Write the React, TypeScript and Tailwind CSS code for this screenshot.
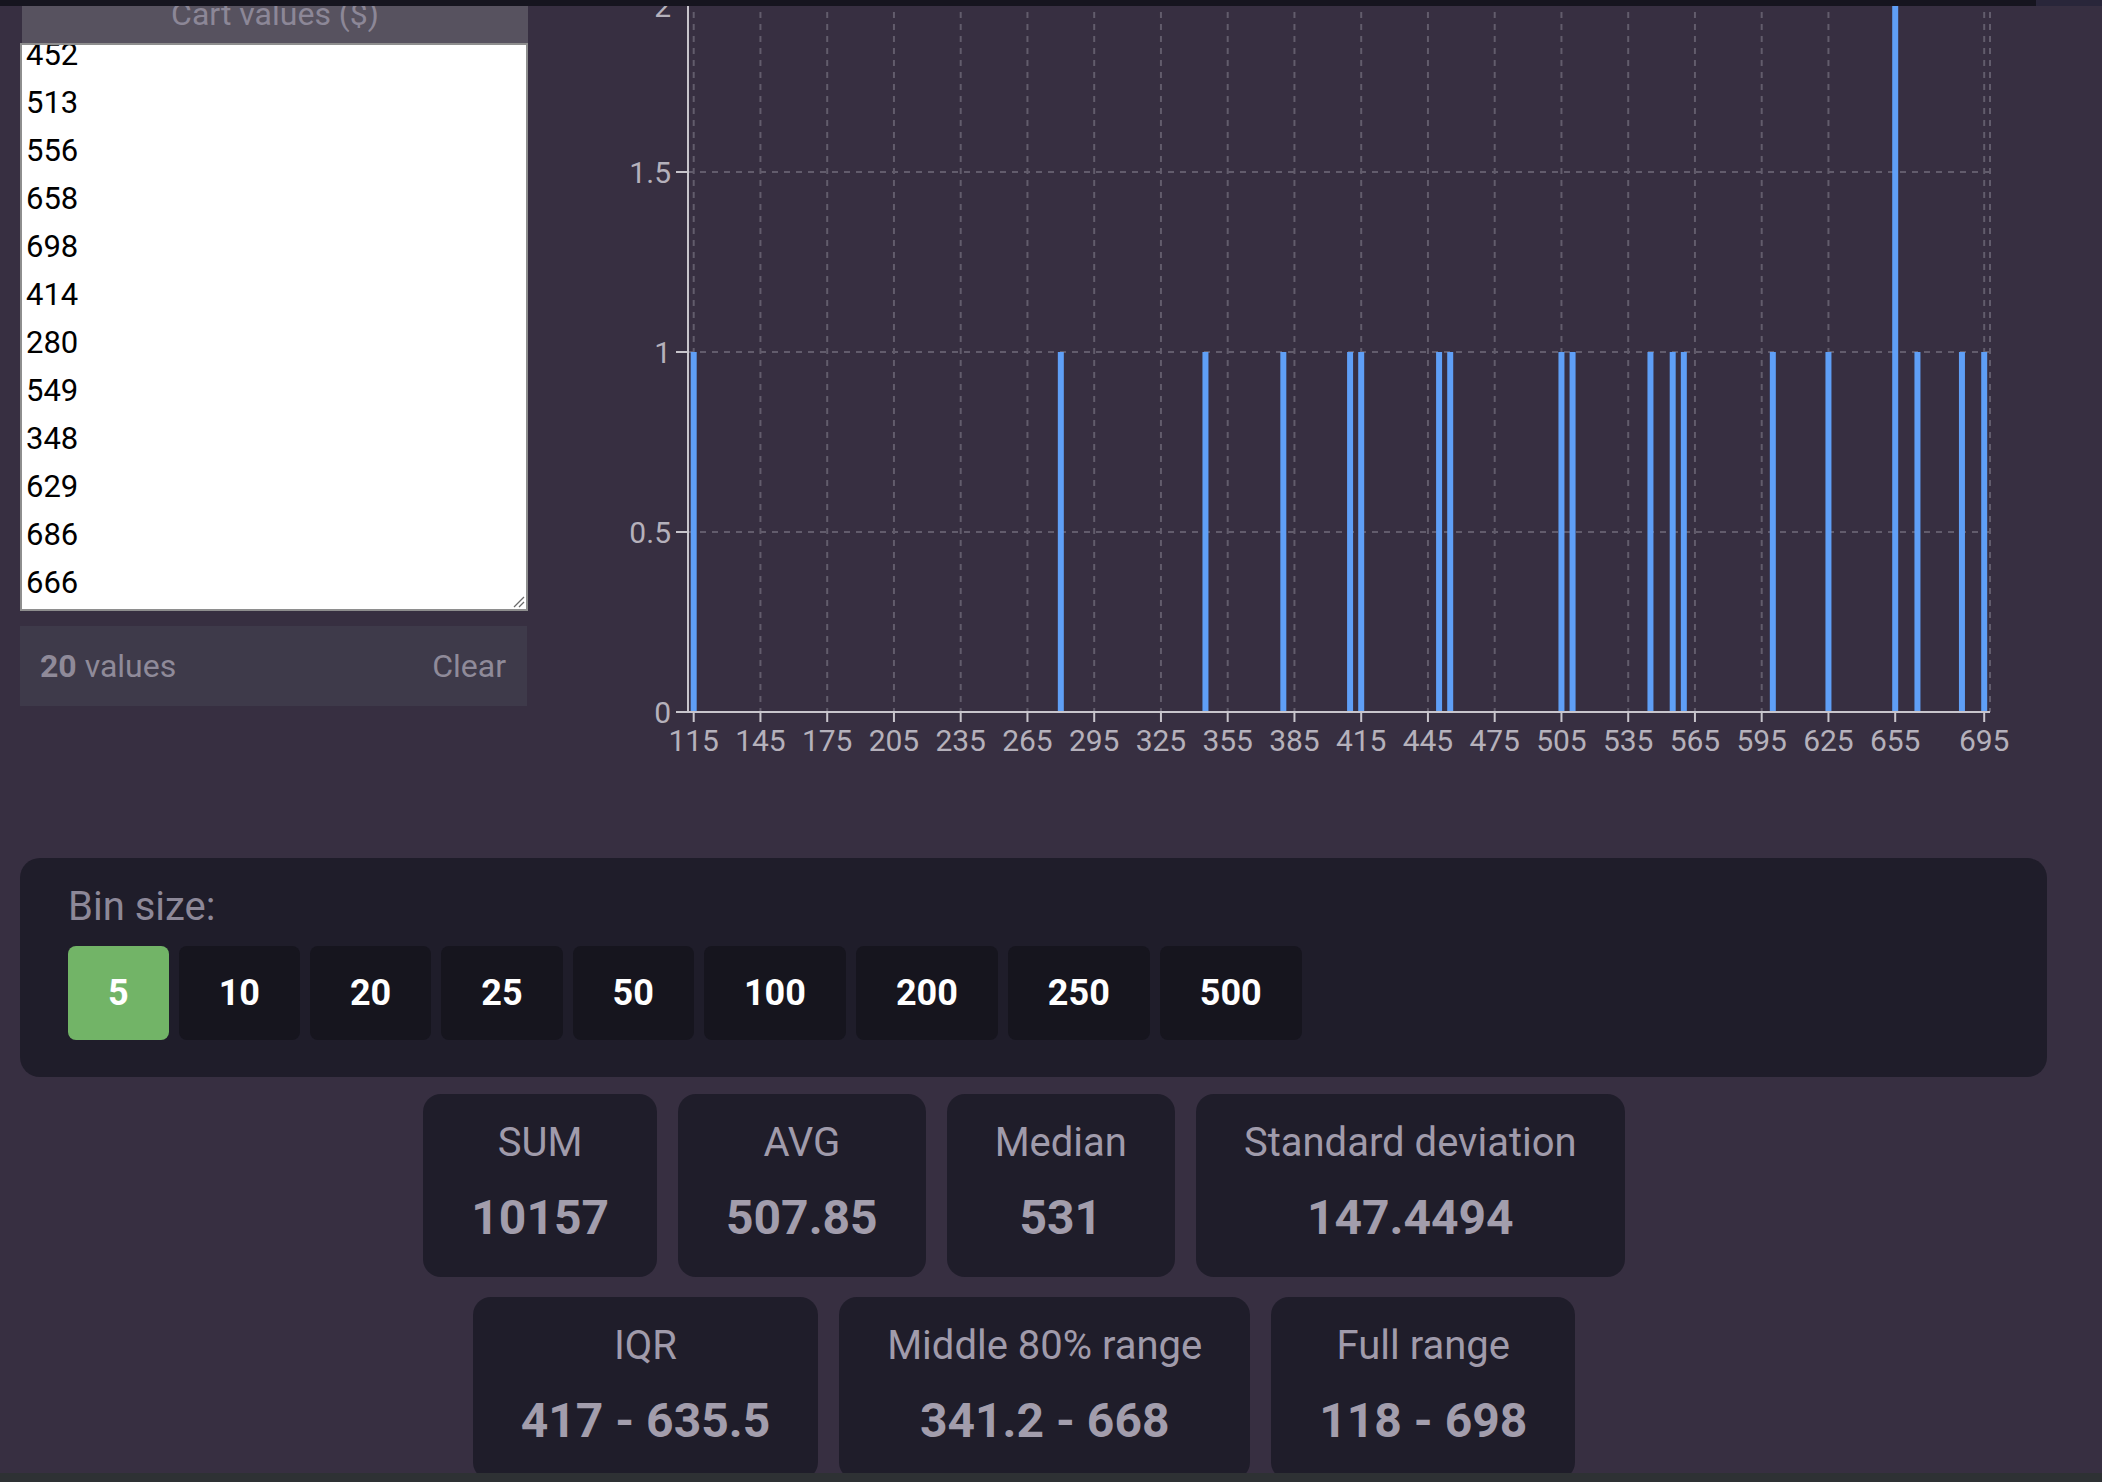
import React from "react";

const VALUES = ["452", "513", "556", "658", "698", "414", "280", "549", "348", "629", "686", "666"];

// bin start -> count, bin size 5
const BINS: [number, number][] = [
  [115, 1], [280, 1], [345, 1], [380, 1], [410, 1], [415, 1], [450, 1], [455, 1],
  [505, 1], [510, 1], [545, 1], [555, 1], [560, 1], [600, 1], [625, 1], [655, 2],
  [665, 1], [685, 1], [695, 1],
];

const X_TICKS = [115, 145, 175, 205, 235, 265, 295, 325, 355, 385, 415, 445, 475, 505, 535, 565, 595, 625, 655, 695];
const BIN_SIZES = [5, 10, 20, 25, 50, 100, 200, 250, 500];

const STATS_TOP = [
  { label: "SUM", value: "10157" },
  { label: "AVG", value: "507.85" },
  { label: "Median", value: "531" },
  { label: "Standard deviation", value: "147.4494" },
];
const STATS_BOTTOM = [
  { label: "IQR", value: "417 - 635.5" },
  { label: "Middle 80% range", value: "341.2 - 668" },
  { label: "Full range", value: "118 - 698" },
];

const x = (v: number) => 693.7 + (v - 115) * 2.225;
const y = (c: number) => 712 - c * 360;

function CartPanel() {
  return (
    <div className="flex w-[508px] flex-col">
      {/* Header */}
      <div className="ml-[2px] h-[37px] w-[506px] overflow-hidden bg-[#57525f] text-center">
        <div className="-mt-[11px] text-[32px] leading-[normal] text-[#8c8797]">Cart values ($)</div>
      </div>

      {/* Values box */}
      <div className="relative h-[568px] overflow-hidden border-2 border-[#8e8e8e] bg-white">
        <div className="-mt-[14px] pl-[4px]">
          {VALUES.map((v, i) => (
            <div key={i} className="text-[31px] leading-[48px] text-black">
              {v}
            </div>
          ))}
        </div>
        <svg className="absolute right-[1px] bottom-[1px]" width="14" height="14" viewBox="0 0 14 14">
          <line x1="3" y1="13" x2="13" y2="3" stroke="#6b6b6b" strokeWidth="1.2" />
          <line x1="8" y1="13" x2="13" y2="8" stroke="#6b6b6b" strokeWidth="1.2" />
        </svg>
      </div>

      {/* Footer */}
      <div className="mt-[15px] flex h-[80px] w-[507px] items-center justify-between bg-[#3e3a4a] pr-[21px] pl-5 text-[32px] text-[#8f8a99]">
        <span>
          <span className="font-bold">20</span> values
        </span>
        <span>Clear</span>
      </div>
    </div>
  );
}

function Histogram() {
  const gridX = [...X_TICKS.map(x), 1990];
  return (
    <svg width="1554" height="852" viewBox="528 6 1554 852" className="block">
      {/* grid */}
      {[172, 352, 532].map((gy) => (
        <line key={gy} x1={688} x2={1990} y1={gy} y2={gy} stroke="#625c6c" strokeWidth="2" strokeDasharray="6 6" />
      ))}
      {gridX.map((gx, i) => (
        <line key={i} x1={gx} x2={gx} y1={0} y2={712} stroke="#625c6c" strokeWidth="2" strokeDasharray="6 6" />
      ))}

      {/* bars */}
      {BINS.map(([b, c]) => (
        <rect key={b} x={x(b) - 3} y={y(c)} width={6} height={712 - y(c)} fill="#5f9ff6" />
      ))}

      {/* y axis */}
      <line x1={688} x2={688} y1={0} y2={713} stroke="#c8c5cc" strokeWidth="2" />
      {[
        { v: "2", c: 6 },
        { v: "1.5", c: 172 },
        { v: "1", c: 352 },
        { v: "0.5", c: 532 },
        { v: "0", c: 712 },
      ].map((t) => (
        <g key={t.v}>
          {t.v !== "2" && <line x1={676} x2={688} y1={t.c} y2={t.c} stroke="#c8c5cc" strokeWidth="2" />}
          <text x={671} y={t.c + 11} textAnchor="end" fontSize="30" fontFamily="Roboto, sans-serif" fill="#b5b1bb">
            {t.v}
          </text>
        </g>
      ))}

      {/* x axis */}
      <line x1={687} x2={1990} y1={712} y2={712} stroke="#c8c5cc" strokeWidth="2" />
      {X_TICKS.map((t) => (
        <g key={t}>
          <line x1={x(t)} x2={x(t)} y1={712} y2={722} stroke="#c8c5cc" strokeWidth="2" />
          <text x={x(t)} y={751} textAnchor="middle" fontSize="30" fontFamily="Roboto, sans-serif" fill="#b5b1bb">
            {t}
          </text>
        </g>
      ))}
    </svg>
  );
}

function BinPanel() {
  const active = 5;
  return (
    <div className="h-[219px] w-[2027px] rounded-[20px] bg-[#1f1d2a] pt-[25px] pl-12">
      <div className="text-[40px] leading-[normal] text-[#8d8898]">Bin size:</div>
      <div className="mt-[16px] flex gap-[10px]">
        {BIN_SIZES.map((s) => (
          <button
            key={s}
            className={
              s === active
                ? "h-[94px] rounded-lg bg-[#72b467] px-10 text-[36px] font-bold text-white"
                : "h-[94px] rounded-lg bg-[#16151e] px-10 text-[36px] font-bold text-white"
            }
          >
            {s}
          </button>
        ))}
      </div>
    </div>
  );
}

function StatCard({ label, value }: { label: string; value: string }) {
  return (
    <div className="flex flex-col items-center rounded-[18px] bg-[#1f1d2a] px-[48px] pt-[25px] pb-[31px]">
      <div className="text-[40px] leading-[normal] text-[#a09bab]">{label}</div>
      <div className="mt-[23px] text-[48px] leading-[normal] font-bold text-[#a29dac]">{value}</div>
    </div>
  );
}

export default function App() {
  return (
    <div className="relative h-[1482px] overflow-hidden bg-[#372f41] font-['Roboto',sans-serif]">
      {/* top strip */}
      <div className="flex h-[6px]">
        <div className="w-[2036px] bg-[#16151f]" />
        <div className="flex-1 bg-[#29263a]" />
      </div>

      <div className="px-5">
        <div className="flex h-[852px]">
          <CartPanel />
          <Histogram />
        </div>

        <BinPanel />

        <div className="mt-[17px] flex w-[2008px] flex-col items-center gap-5">
          <div className="flex gap-[21px]">
            {STATS_TOP.map((s) => (
              <StatCard key={s.label} {...s} />
            ))}
          </div>
          <div className="flex gap-[21px]">
            {STATS_BOTTOM.map((s) => (
              <StatCard key={s.label} {...s} />
            ))}
          </div>
        </div>
      </div>

      <div className="fixed right-0 bottom-0 left-0 h-[9px] bg-[#2e3134]" />
    </div>
  );
}
